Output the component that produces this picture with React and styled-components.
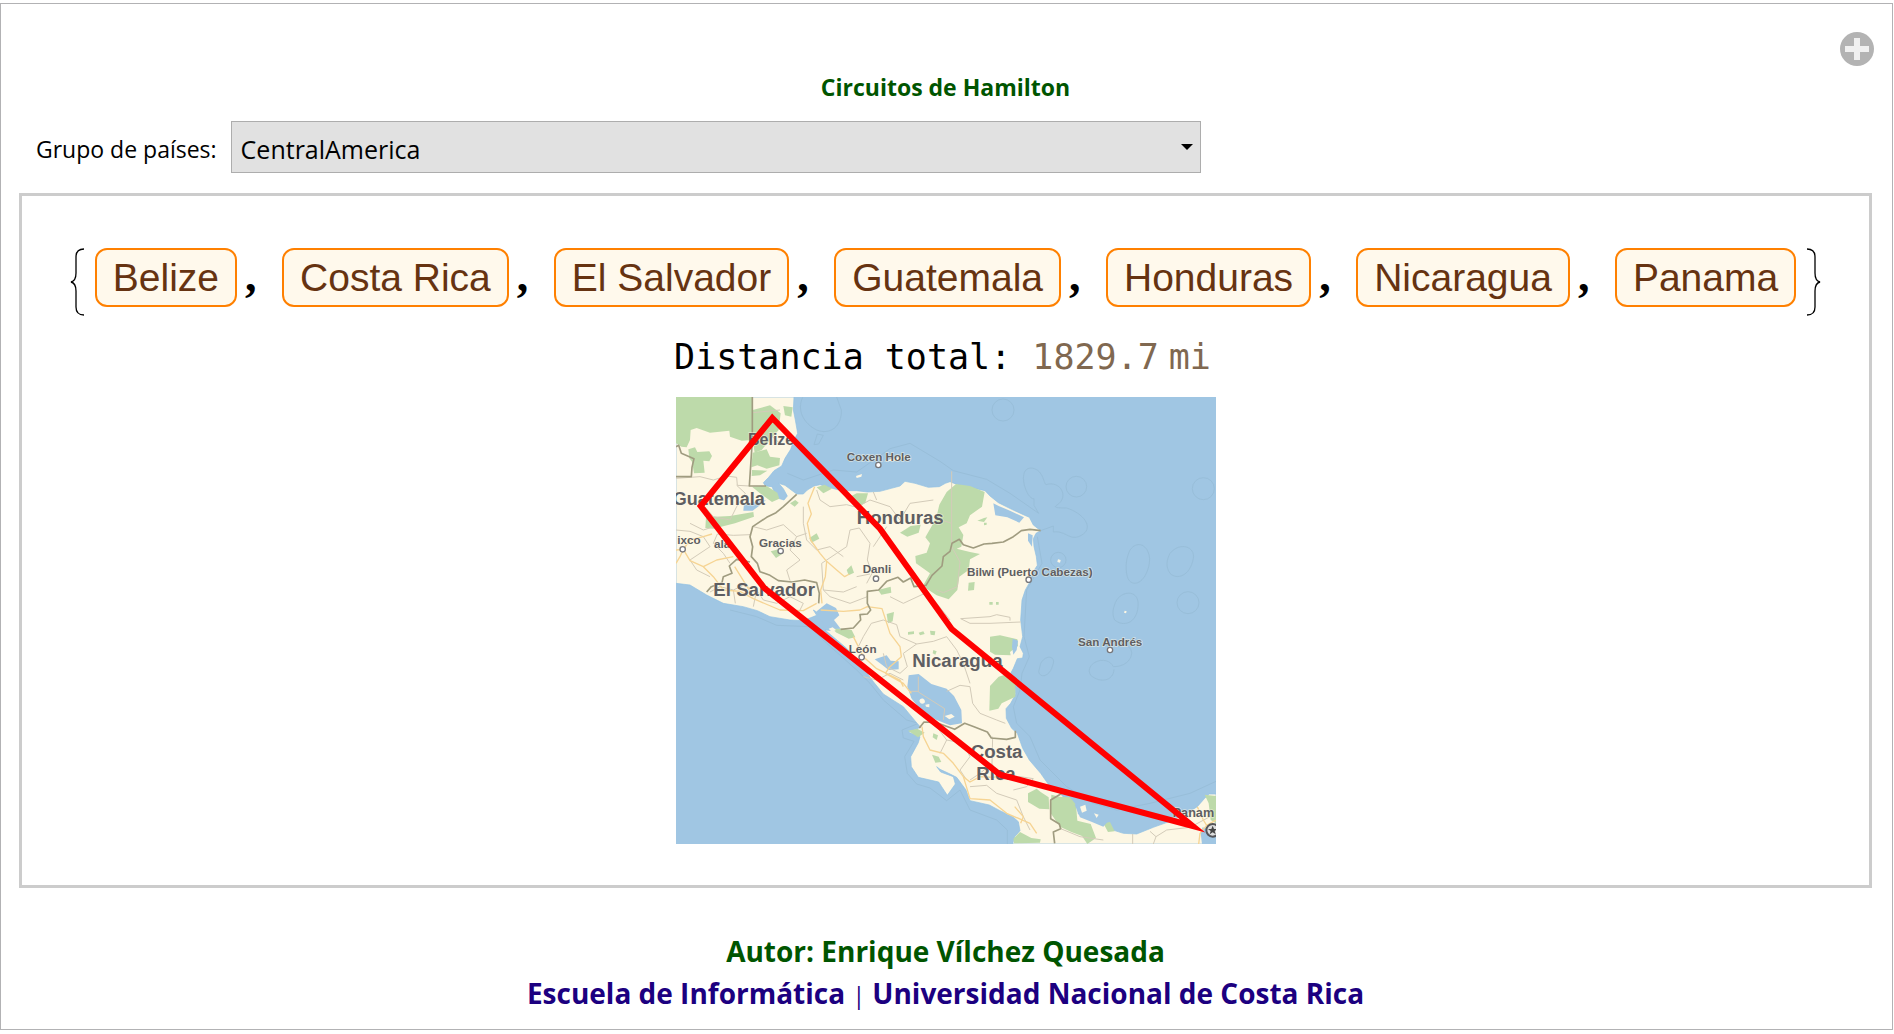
import React from "react";
import styled, { createGlobalStyle } from "styled-components";

const GlobalStyle = createGlobalStyle`
  * { box-sizing: border-box; }
  body { margin: 0; background: #fff; color: #000; font-family: "Open Sans", "Noto Sans", sans-serif; }
`;

const Frame = styled.main`
  display: flex;
  flex-direction: column;
  margin: 3px 1px 4px 0;
  padding: 28px 20px 15px 18px;
  border: 1px solid #b2b2b4;
`;

const AddButton = styled.button`
  display: block;
  align-self: flex-end;
  width: 34px;
  height: 34px;
  margin-right: -2px;
  padding: 0;
  border: 0;
  background: none;
  cursor: pointer;
`;

const Title = styled.h1`
  margin: 5px 0 18px;
  font-size: 23px;
  line-height: 32px;
  font-weight: 700;
  text-align: center;
  color: #005500;
`;

const Controls = styled.div`
  display: flex;
  align-items: center;
  gap: 14px;
  padding-left: 17px;
  margin-bottom: 20px;
`;

const Label = styled.label`
  padding-top: 4px;
  font-size: 23px;
  line-height: 32px;
  white-space: nowrap;
`;

const SelectBox = styled.div`
  display: grid;
  flex: 0 1 970px;
  align-items: center;
  & > * { grid-area: 1 / 1; }
`;

const Select = styled.select`
  appearance: none;
  width: 100%;
  height: 52px;
  padding: 4px 32px 0 9px;
  border: 1px solid #adadad;
  border-radius: 0;
  background: #e1e1e1;
  color: #000;
  font: 25px "Open Sans", "Noto Sans", sans-serif;
`;

const Arrow = styled.svg`
  justify-self: end;
  margin-right: 8px;
  pointer-events: none;
`;

const Panel = styled.section`
  display: flex;
  flex-direction: column;
  align-items: center;
  padding: 52px 20px 41px;
  border: 3px solid #ccc;
`;

const Tour = styled.div`
  display: flex;
  align-items: flex-start;
  gap: 10px;
`;

const Countries = styled.ul`
  display: flex;
  margin: 0;
  padding: 0;
  list-style: none;
`;

const Country = styled.li`
  display: flex;
  align-items: baseline;
  &:not(:last-child)::after {
    content: ",";
    box-sizing: border-box;
    width: 45px;
    padding-left: 8px;
    font: 700 46px/56px "Liberation Serif", serif;
  }
`;

const Chip = styled.span`
  padding: 0 16px;
  border: 2px solid #ff8000;
  border-radius: 12px;
  background: #fff9ec;
  color: #663311;
  font: 39px/55px "Liberation Sans", Arial, sans-serif;
  white-space: nowrap;
`;

const Distance = styled.p`
  display: flex;
  margin: 17px 0 16px;
  padding-right: 6px;
  font: 35px/48px "DejaVu Sans Mono", monospace;
  white-space: pre;
`;

const Quantity = styled.span`
  display: flex;
  gap: 10px;
  color: #806850;
`;

const MapView = styled.svg`
  display: block;
  width: 540px;
  max-width: 100%;
  height: auto;
`;

const Footer = styled.footer`
  margin-top: 42px;
  font-size: 28px;
  line-height: 42px;
  font-weight: 700;
  text-align: center;
`;

const Credit = styled.p`
  margin: 0;
  color: ${(p) => p.$color};
`;

const Bar = styled.span`
  font-size: 23px;
  line-height: 32px;
  font-weight: 400;
`;

const countries = ["Belize", "Costa Rica", "El Salvador", "Guatemala", "Honduras", "Nicaragua", "Panama"];

const land =
  "M18 21H372L370 60L376 90L383 130L372 150L362 178L345 205L335 228L312 242L296 262L280 278L286 288L306 290L312 304L325 325L342 330L352 318L340 296L326 280L345 286L380 312L400 312L412 300L432 288L450 284L475 292L515 302L560 302L592 306L630 304L664 295L690 288L705 274L735 280L775 292L808 290L826 280L840 275L862 284L890 290L945 302L960 318L985 338L1025 358L1060 374L1078 382L1090 405L1112 422L1098 430L1090 446L1092 470L1099 500L1102 526L1088 548L1080 575L1066 600L1056 630L1052 690L1058 740L1050 770L1060 790L1058 804L1042 806L1030 835L1022 850L1034 880L1037 912L1022 940L1008 956L1009 985L1025 1015L1042 1030L1058 1075L1078 1110L1112 1150L1140 1190L1170 1210L1188 1230L1222 1250L1225 1272L1260 1282L1300 1290L1322 1318L1360 1330L1400 1332L1450 1312L1500 1294L1546 1272L1582 1250L1604 1225L1618 1212L1638 1212V1362H1028L1034 1340L1050 1322L1045 1295L1028 1280L990 1262L958 1245L900 1232L888 1200L860 1162L836 1150L810 1138L800 1130L812 1146L850 1160L856 1182L832 1216L815 1190L806 1176L745 1162L724 1130L722 1100L745 1058L750 1040L714 1026L752 1012L738 996L700 950L640 912L606 870L570 820L530 775L465 720L490 722L480 700L450 672L430 660L440 676L400 692L360 690L300 680L262 662L220 650L160 640L110 615L60 585L18 580Z";

const greens = [
  "M18 21H247V150L215 152L180 140L178 122L120 128L80 114L62 120L60 150L50 172L34 170L18 160Z",
  "M55 178L75 172L82 186L118 184L126 198L118 214L100 212L104 248L72 250L66 215L58 205Z",
  "M248 60L300 46L332 70L326 120L300 150L275 180L254 188L248 150Z",
  "M340 48L368 52L364 80L345 76Z",
  "M248 188L290 178L300 200L330 204L328 226L290 236L262 226L244 232Z",
  "M246 240L292 242L270 256L245 258Z",
  "M246 290L290 288L322 308L328 326L306 336L268 308Z",
  "M108 382L180 378L250 366L252 380L195 400L130 416L106 414Z",
  "M360 340L376 330L386 338L374 350Z",
  "M440 292L464 284L486 296L460 310Z",
  "M528 326L560 310L594 310L586 338L570 348Z",
  "M418 444L440 430L448 446L424 458Z",
  "M690 428L722 408L752 404L746 428L712 440Z",
  "M858 282L900 288L944 306L936 350L900 376L890 400L866 412L880 435L874 470L860 476L900 486L930 492L900 508L896 540L868 560L862 600L836 628L800 616L770 596L762 582L780 550L738 520L736 498L770 488L780 460L766 442L790 400L802 370L808 344L830 306Z",
  "M302 484L326 478L340 490L318 504Z",
  "M530 540L544 526L552 548L536 556Z",
  "M624 600L662 590L664 608L634 614Z",
  "M896 578L914 576L912 600L894 602Z",
  "M960 740L990 736L1042 748L1044 768L1020 786L1022 796L975 794L960 785Z",
  "M960 888L986 860L1012 852L1036 880L1036 920L995 940L985 956L958 962Z",
  "M480 712L545 720L556 742L536 746L500 728Z",
  "M714 1022L742 1016L764 1028L744 1042Z",
  "M786 1094L806 1100L814 1116L796 1118Z",
  "M650 672L672 666L668 694L654 700Z",
  "M1074 1210L1100 1196L1112 1206L1136 1222L1138 1258L1108 1256L1074 1236Z",
  "M1144 1214L1168 1220L1200 1222L1218 1244L1222 1292L1262 1302L1278 1344L1252 1362L1236 1338L1204 1326L1170 1310L1142 1270Z",
  "M1030 1346L1050 1326L1084 1344L1112 1348L1110 1358L1032 1360Z",
  "M1300 1300L1320 1296L1334 1324L1314 1326Z",
  "M1604 1214L1638 1218V1300L1622 1290L1616 1240Z",
  "M790 1030L804 1036L800 1050L788 1042Z",
  "M942 398l8 0l0 6l-8 2zM922 392l20 -8l10 -2l-10 14zM958 636l10 0v8h-10zM978 636l8 0v8h-8z",
  "M714 726l18 -2v8l-18 2zM746 728l14 -4l4 8l-14 4zM780 722l16 2l-2 12l-12 -2zM790 780l10 4l-4 10l-8 -4z",
];

const lakes = [
  "M614 808L650 796L662 812L686 814L686 838L656 840L636 824Z",
  "M716 856L746 852L784 882L830 896L852 918L874 960L876 1000L840 1006L800 990L756 966L724 925L712 890Z",
  "M222 342L258 336L288 330L264 350L248 362L220 362Z",
  "M970 340L986 348L1020 362L1062 382L1048 398L1012 382L976 376Z",
  "M1074 430L1088 436L1086 470L1074 452Z",
  "M1028 746L1044 752L1040 780L1030 794L1026 770Z",
  "M1214 1244L1244 1232L1290 1256L1318 1290L1300 1310L1266 1296L1230 1282Z",
  "M440 664L470 640L498 654L508 676L492 690L512 716L478 716L456 694Z",
  "M1596 1362L1592 1330L1598 1312L1638 1326V1362Z",
];

const borders = [
  "M247 21V150L238 288H288",
  "M18 170L26 166L34 190L72 206L66 232L64 260H18",
  "M380 313L340 350L318 368L290 382L248 410L240 440L248 470L244 500L262 520L270 545L300 556L325 572L366 576L404 570L440 578L448 610L446 640",
  "M110 606L124 590L156 578L160 560L186 550L178 528L200 508L240 516",
  "M512 718L550 714L572 690L570 674L592 672L602 660L592 640L592 604L626 600L650 574L684 562L700 576L722 564L732 590L768 586L786 556L816 528L820 500L840 484L846 460L868 448L880 464L910 474L942 462L966 460L1000 456L1030 440L1054 422L1080 418L1112 422",
  "M748 1014L762 996L800 998L854 1018L884 1000L912 1010L952 1026L964 1044L1010 1048L1036 1042V1022",
  "M1176 1210L1142 1230V1286L1168 1302L1172 1316L1150 1326L1154 1360",
];

const districts = [
  "M18 265L90 260L130 270L170 258L200 262L202 286L238 288",
  "M248 68L330 60M252 140L300 134L330 160",
  "M130 300L100 345L130 380L180 390L200 350L226 310M226 310L200 286M60 400L100 420L150 404",
  "M18 420L60 424L100 440L120 470L90 490L60 510L80 540L120 560",
  "M142 432L190 436L240 434M142 432L130 460L160 490L180 520",
  "M250 410L290 420L340 404L380 440L410 430M380 440L360 480L390 510L350 540L360 572",
  "M400 350L400 400L410 450L440 480L480 470L520 500M440 300L450 330L480 350L530 344L560 352",
  "M530 470L540 420L568 414L600 460L592 510L606 550L590 580M530 470L500 490L455 520L460 600L480 620",
  "M560 352L600 330L660 350L690 390L720 340L790 330M610 306L620 330M650 410L630 440L610 470",
  "M480 620L540 640L592 620M460 600L520 606L560 590",
  "M845 244V400L820 392M845 400V470L870 516L862 590L820 608L800 600",
  "M872 686L960 680L980 674L1020 682V692M872 686L900 700L960 700L1052 696",
  "M604 700L640 690L680 704L690 740L740 762L790 754L830 740L860 780L880 820L900 880",
  "M740 762L700 790L712 830L690 850M604 700L580 740L560 780M640 790L650 830L690 850",
  "M830 904L870 886L900 890L908 940L930 970L980 990L1006 1000",
  "M580 860L620 870L660 850L700 870M560 560L600 552M660 620L700 640L760 612L800 640L840 690",
  "M800 1010L830 1050L810 1090M830 1050L880 1060L900 1100L870 1140L890 1170M968 1040L966 1120L930 1150L900 1170",
  "M966 1120L990 1170L1050 1160L1090 1166L1070 1190L1030 1200M900 1190L950 1186L980 1210L1040 1230L1060 1280L1080 1320",
  "M1172 1316L1230 1340L1300 1350M1388 1332V1362M1440 1324L1458 1340L1450 1362M1458 1340L1490 1320L1560 1312L1620 1280",
  "M120 606L150 590L190 600L220 586L260 600L280 630L320 640L360 620M190 600L196 640M260 600L250 650M360 620L400 640L380 680",
  "M745 860V906L824 956L820 990M718 904H745",
];

const roads = [
  "M18 480L40 478L60 512L100 530L130 560L160 600L210 604L250 626L330 660L400 662L440 640",
  "M40 478L60 450L100 440L126 432M100 530L140 510L190 500",
  "M434 290L414 340L424 372L412 400L422 450L450 490L470 514L466 560L452 600L456 640",
  "M470 514L500 540L524 560L538 552M18 520L30 500L40 478",
  "M452 660L520 664L570 660L592 650L636 656L660 730L690 770L694 800L660 830L646 850",
  "M550 740L580 800L620 836L690 870L700 890M646 850L700 880L724 910",
  "M756 1010L760 1040L780 1080L820 1090L850 1120L880 1160L900 1176L930 1160L970 1162L1020 1150L1060 1176",
  "M880 1160L900 1226L960 1230L1010 1270L1080 1300L1100 1330M1034 1250L1060 1280L1052 1300",
  "M1638 1290L1610 1306L1590 1330L1586 1362M1582 1250L1600 1290L1610 1306M194 530L250 620",
];

const waterLines = [
  "M398 22C380 60 400 100 440 120C480 136 516 110 514 60L500 21",
  "M432 164L442 132L460 136L446 162Z",
  "M352 250L400 270L490 240L560 246L660 176L720 160L810 214L850 242L950 268L1020 310L1106 370",
  "M1106 370L1092 346V326C1070 330 1040 240 1080 234C1120 234 1120 280 1128 284C1170 270 1200 320 1160 346C1150 352 1160 354 1190 354C1240 370 1270 410 1240 432C1200 460 1190 420 1150 426V408L1112 422",
  "M1102 440L1116 520L1070 600L1062 740L1078 800L1056 850L1050 900L1030 950L1040 1000L1080 1040L1110 1110L1190 1190L1270 1240L1340 1260L1440 1240L1560 1210L1638 1174",
  "M1380 480C1410 440 1450 480 1436 530C1420 590 1380 590 1372 560C1364 530 1370 500 1380 480Z",
  "M1500 490C1530 454 1576 470 1570 505C1560 560 1520 570 1500 550C1486 530 1490 510 1500 490Z",
  "M1340 630C1360 600 1410 600 1404 650C1400 700 1360 712 1334 690C1324 670 1330 650 1340 630Z",
  "M1112 820C1130 790 1160 800 1148 826C1140 860 1110 866 1106 845Z",
  "M1346 770C1400 750 1400 830 1330 830C1310 790 1240 820 1262 856C1290 880 1330 874 1332 838",
  "M180 660L260 680L320 706L420 710L470 760L560 840L600 880L640 930L710 990L746 1000L696 1020L700 1044L732 1054L704 1100L712 1150L740 1182L780 1194L830 1232L870 1200L900 1260L980 1290L1012 1320V1362",
];

const rings = [
  { x: 999, y: 60, r: 33 },
  { x: 1219, y: 290, r: 31 },
  { x: 1600, y: 296, r: 33 },
  { x: 1165, y: 510, r: 23 },
  { x: 1554, y: 638, r: 33 },
];

const islands = ["M1164 508l8 2l-2 8l-8 -2z", "M1364 662l6 2l-2 6l-6 -2z", "M558 258L576 252L574 260L560 264Z", "M640 214L700 198L720 194L680 212Z", "M748 932C752 920 768 926 764 938C756 944 750 940 748 932Z", "M766 944l12 -2v10l-10 -2z", "M476 716l12 -4l10 8l-12 6z", "M1230 1250l16 -6l4 18l-14 6z", "M1272 1270l14 4l-6 10z", "M824 978l20 -6l10 8l-16 8z"];

const places = [
  { name: "Belize", x: 234, y: 164, size: 48 },
  { name: "Guatemala", x: 8, y: 346, size: 54 },
  { name: "Honduras", x: 560, y: 403, size: 56 },
  { name: "El Salvador", x: 130, y: 619, size: 56 },
  { name: "Nicaragua", x: 727, y: 830, size: 56 },
  { name: "Costa", x: 902, y: 1105, size: 56 },
  { name: "Rica", x: 919, y: 1170, size: 56 },
  { name: "Coxen Hole", x: 530, y: 212, size: 35, dot: [625, 225] },
  { name: "ixco", x: 22, y: 462, size: 35, dot: [38, 478] },
  { name: "ala", x: 132, y: 475, size: 35 },
  { name: "Gracias", x: 267, y: 470, size: 35, dot: [332, 483] },
  { name: "Danli", x: 578, y: 550, size: 35, dot: [618, 566] },
  { name: "León", x: 536, y: 789, size: 35, dot: [575, 802] },
  { name: "Bilwi (Puerto Cabezas)", x: 891, y: 559, size: 35, dot: [1076, 569] },
  { name: "San Andrés", x: 1224, y: 767, size: 35, dot: [1320, 780] },
  { name: "Panam", x: 1508, y: 1281, size: 38 },
];

// Map units are thirds of a pixel at the natural width.
function TourMap() {
  return (
    <MapView viewBox="18 21 1620 1341" role="img" aria-label="Mapa del circuito">
      <rect x="18" y="21" width="1620" height="1341" fill="#a0c6e3" />
      <g fill="none" stroke="#98bed9" strokeWidth="3">
        {waterLines.map((d) => <path key={d} d={d} />)}
        {rings.map((c) => <circle key={c.x} cx={c.x} cy={c.y} r={c.r} />)}
      </g>
      <path d={land} fill="#fdf7e4" stroke="#8fbfe3" strokeWidth="2" />
      <g fill="#bddaaa">{greens.map((d) => <path key={d} d={d} />)}</g>
      <g fill="#a0c6e3">{lakes.map((d) => <path key={d} d={d} />)}</g>
      <g fill="#fdf7e4">{islands.map((d) => <path key={d} d={d} />)}</g>
      <g fill="none" strokeLinejoin="round">
        <g stroke="#d3cbb9" strokeWidth="3">{districts.map((d) => <path key={d} d={d} />)}</g>
        <g stroke="#f6d493" strokeWidth="4">{roads.map((d) => <path key={d} d={d} />)}</g>
        <g stroke="#a09c80" strokeWidth="5">{borders.map((d) => <path key={d} d={d} />)}</g>
      </g>
      <g fill="#5e5e62" stroke="#fdf7e4" strokeOpacity="0.6" strokeWidth="4" paintOrder="stroke" fontFamily="'Liberation Sans', Arial, sans-serif" fontWeight="700">
        {places.map((p) => <text key={p.name} x={p.x} y={p.y} fontSize={p.size}>{p.name}</text>)}
      </g>
      <g fill="#fff" stroke="#77777b" strokeWidth="4">
        {places.filter((p) => p.dot).map((p) => <circle key={p.name} cx={p.dot[0]} cy={p.dot[1]} r="8" />)}
      </g>
      <circle cx="1628" cy="1321" r="19" fill="#ddd" stroke="#555559" strokeWidth="6" />
      <path d="M1628 1307l4 10h10l-8 6l3 10l-9 -6l-9 6l3 -10l-8 -6h10z" fill="#444" />
      <path d="M307 84L630 416L845 717L1568 1308L990 1154L283 594L92 348Z" fill="none" stroke="#f00" strokeWidth="18" strokeMiterlimit="10" />
    </MapView>
  );
}

export default function App() {
  return (
    <>
      <GlobalStyle />
      <Frame>
        <AddButton type="button" aria-label="Más opciones">
          <svg width="34" height="34" viewBox="0 0 34 34" aria-hidden="true">
            <circle cx="17" cy="17" r="17" fill="#b3b3b3" />
            <path d="M14 6h6v8h9v6h-9v8h-6v-8H5v-6h9z" fill="#f0f0f0" />
          </svg>
        </AddButton>
        <Title>Circuitos de Hamilton</Title>
        <Controls>
          <Label htmlFor="grupo">Grupo de países:</Label>
          <SelectBox>
            <Select id="grupo" defaultValue="CentralAmerica">
              <option>CentralAmerica</option>
            </Select>
            <Arrow width="12" height="6" viewBox="0 0 12 6" aria-hidden="true">
              <path d="M0 0H12L6 6Z" />
            </Arrow>
          </SelectBox>
        </Controls>
        <Panel>
          <Tour>
            <svg width="15" height="68" viewBox="0 0 15 68" fill="none" stroke="#000" strokeWidth="1.3" aria-hidden="true">
              <path d="M14 1C8 1 6 4 6 9V25C6 30 5 33 1 34C5 35 6 38 6 43V59C6 64 8 67 14 67" />
            </svg>
            <Countries>
              {countries.map((name) => (
                <Country key={name}><Chip>{name}</Chip></Country>
              ))}
            </Countries>
            <svg width="15" height="68" viewBox="0 0 15 68" fill="none" stroke="#000" strokeWidth="1.3" aria-hidden="true">
              <path d="M1 1C7 1 9 4 9 9V25C9 30 10 33 14 34C10 35 9 38 9 43V59C9 64 7 67 1 67" />
            </svg>
          </Tour>
          <Distance>
            {"Distancia total: "}
            <Quantity><span>1829.7</span><span>mi</span></Quantity>
          </Distance>
          <TourMap />
        </Panel>
        <Footer>
          <Credit $color="#005500">Autor: Enrique Vílchez Quesada</Credit>
          <Credit $color="#1c0080">Escuela de Informática <Bar>|</Bar> Universidad Nacional de Costa Rica</Credit>
        </Footer>
      </Frame>
    </>
  );
}
